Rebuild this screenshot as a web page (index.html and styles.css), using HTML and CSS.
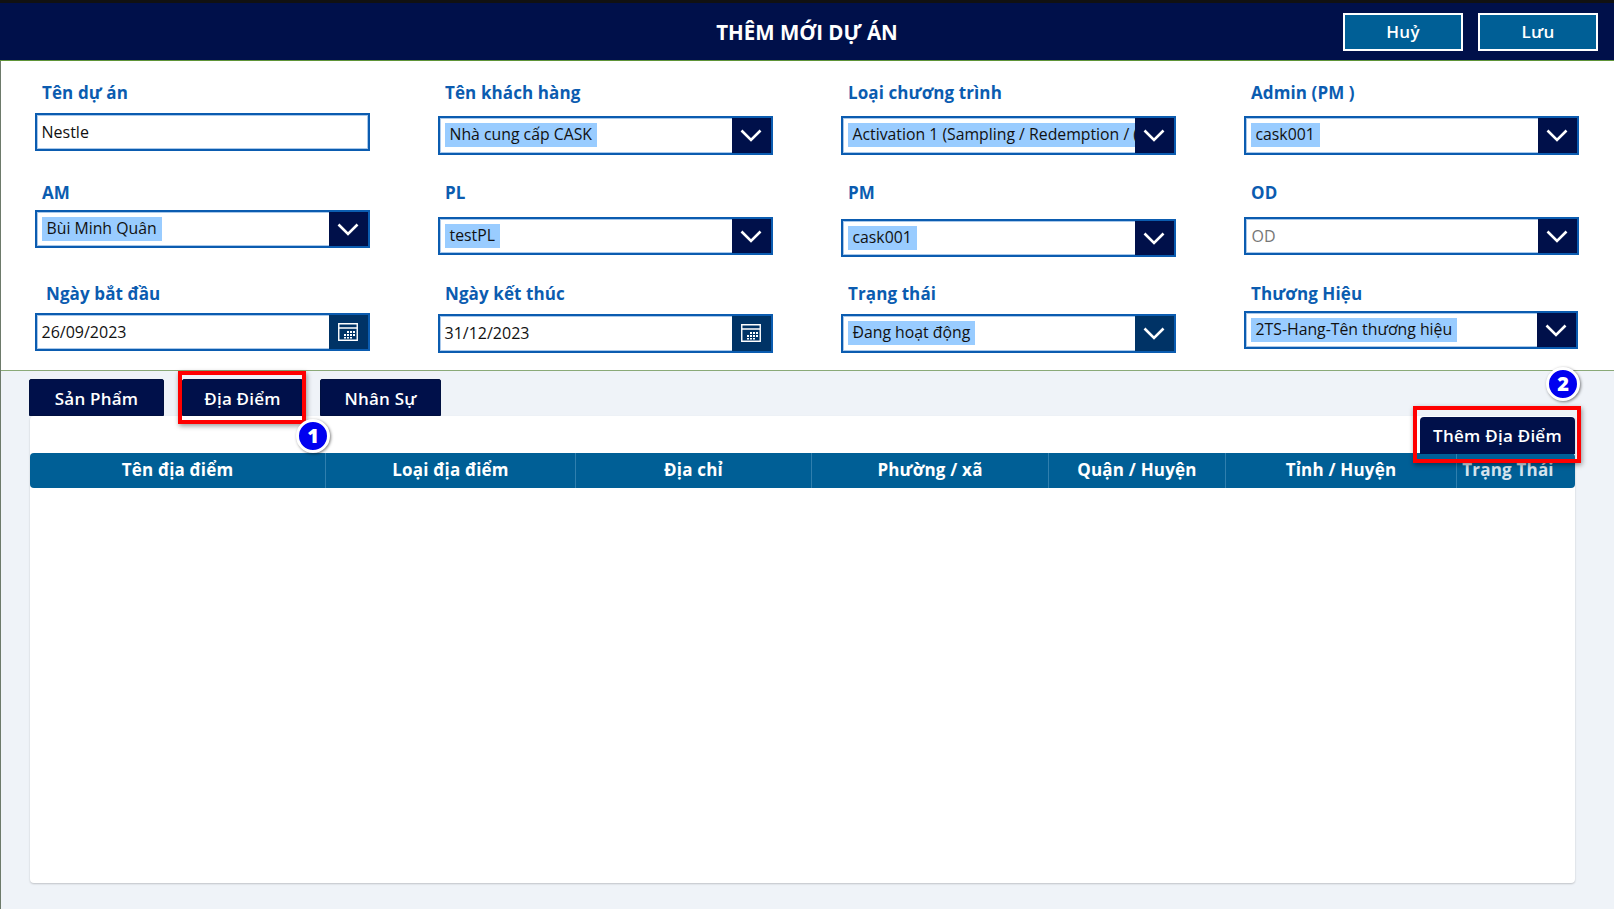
FILE: index.html
```html
<!DOCTYPE html>
<html lang="vi">
<head>
<meta charset="utf-8">
<title>Thêm mới dự án</title>
<link rel="stylesheet" href="styles.css">
</head>
<body>
<svg class="defs" width="0" height="0" aria-hidden="true">
  <symbol id="chev" viewBox="0 0 22 13"><path d="M1.5 1.5 11 11 20.5 1.5" fill="none" stroke="#fff" stroke-width="2.6"/></symbol>
  <symbol id="cal" viewBox="0 0 20 18"><path d="M.75.75h18.5v16.5H.75zM.75 5h18.500" fill="none" stroke="#fff" stroke-width="1.400"/><path d="M9 8h2v2H9zM12 8h2v2h-2zM15 8h2v2h-2zM6 11h2v2H6zM9 11h2v2H9zM12 11h2v2h-2zM15 11h2v2h-2zM6 14h2v1.500H6zM9 14h2v1.500H9zM12 14h2v1.500h-2z" fill="#fff"/></symbol>
</svg>
<div class="page">
  <header class="topbar">
    <div></div>
    <h1 class="title">THÊM MỚI DỰ ÁN</h1>
    <div class="actions">
      <button class="action">Huỷ</button>
      <button class="action">Lưu</button>
    </div>
  </header>

  <section class="form">
    <div class="row row-1">
      <div class="field">
        <label class="label">Tên dự án</label>
        <div class="box gap-0"><span class="plain">Nestle</span></div>
      </div>
      <div class="field">
        <label class="label">Tên khách hàng</label>
        <div class="box gap-3"><div class="value"><span class="chip">Nhà cung cấp CASK</span></div><span class="drop"><svg class="chev"><use href="#chev"/></svg></span></div>
      </div>
      <div class="field">
        <label class="label">Loại chương trình</label>
        <div class="box gap-3"><div class="value"><span class="chip">Activation 1 (Sampling / Redemption / (Gift)</span></div><span class="drop"><svg class="chev"><use href="#chev"/></svg></span></div>
      </div>
      <div class="field">
        <label class="label">Admin (PM )</label>
        <div class="box gap-3"><div class="value"><span class="chip">cask001</span></div><span class="drop"><svg class="chev"><use href="#chev"/></svg></span></div>
      </div>
    </div>

    <div class="row row-2">
      <div class="field">
        <label class="label">AM</label>
        <div class="box gap-0"><div class="value"><span class="chip">Bùi Minh Quân</span></div><span class="drop"><svg class="chev"><use href="#chev"/></svg></span></div>
      </div>
      <div class="field">
        <label class="label">PL</label>
        <div class="box gap-7"><div class="value"><span class="chip">testPL</span></div><span class="drop"><svg class="chev"><use href="#chev"/></svg></span></div>
      </div>
      <div class="field">
        <label class="label">PM</label>
        <div class="box gap-10"><div class="value"><span class="chip">cask001</span></div><span class="drop"><svg class="chev"><use href="#chev"/></svg></span></div>
      </div>
      <div class="field">
        <label class="label">OD</label>
        <div class="box gap-7"><div class="value"><span class="placeholder">OD</span></div><span class="drop"><svg class="chev"><use href="#chev"/></svg></span></div>
      </div>
    </div>

    <div class="row row-3">
      <div class="field">
        <label class="label label-in">Ngày bắt đầu</label>
        <div class="box gap-2"><span class="plain">26/09/2023</span><span class="drop drop-alt"><svg class="cal"><use href="#cal"/></svg></span></div>
      </div>
      <div class="field">
        <label class="label">Ngày kết thúc</label>
        <div class="box gap-3"><span class="plain">31/12/2023</span><span class="drop drop-alt"><svg class="cal"><use href="#cal"/></svg></span></div>
      </div>
      <div class="field">
        <label class="label">Trạng thái</label>
        <div class="box gap-3"><div class="value"><span class="chip">Đang hoạt động</span></div><span class="drop drop-alt"><svg class="chev"><use href="#chev"/></svg></span></div>
      </div>
      <div class="field">
        <label class="label">Thương Hiệu</label>
        <div class="box box-narrow gap-0"><div class="value"><span class="chip">2TS-Hang-Tên thương hiệu</span></div><span class="drop"><svg class="chev"><use href="#chev"/></svg></span></div>
      </div>
    </div>
  </section>

  <section class="lower">
    <nav class="tabs">
      <button class="tab tab-1">Sản Phẩm</button>
      <button class="tab tab-2">Địa Điểm</button>
      <button class="tab tab-3">Nhân Sự</button>
    </nav>
    <div class="panel">
      <button class="add">Thêm Địa Điểm</button>
      <div class="thead">
        <div class="th">Tên địa điểm</div>
        <div class="th">Loại địa điểm</div>
        <div class="th">Địa chỉ</div>
        <div class="th">Phường / xã</div>
        <div class="th">Quận / Huyện</div>
        <div class="th">Tỉnh / Huyện</div>
        <div class="th th-last">Trạng Thái</div>
      </div>
    </div>
    <div class="mark mark-1"></div>
    <div class="mark mark-2"></div>
    <div class="badge badge-1">1</div>
    <div class="badge badge-2">2</div>
  </section>
</div>
</body>
</html>
```
FILE: styles.css
```css
* { box-sizing: border-box; }
html, body { margin: 0; height: 100%; overflow: hidden; background: #eff3f8; }
body { font-family: "Open Sans", "Noto Sans", sans-serif; color: #111; }
.defs { position: absolute; }
button { font-family: inherit; cursor: pointer; }

.page { height: 909px; display: flex; flex-direction: column; border-left: 1px solid #6d7a6a; }

.topbar {
  height: 61px;
  flex: none;
  display: grid;
  grid-template-columns: 1fr auto 1fr;
  align-items: center;
  background: #00104a;
  border-top: 3px solid #111;
  border-bottom: 1px solid #5f9438;
  margin-left: -1px;
  padding: 0 16px;
}
.title { margin: 0; color: #fff; font-size: 20.500px; font-weight: 700; line-height: 28px; padding-top: 1px; }
.actions { display: flex; justify-content: flex-end; gap: 15px; }
.action {
  width: 120px;
  height: 38px;
  background: #005f96;
  color: #fff;
  border: 2px solid #fff;
  font-size: 17px;
  font-weight: 600;
  letter-spacing: .3px;
  padding: 0;
}

.form {
  height: 310px;
  flex: none;
  background: #fff;
  border-bottom: 1px solid #8aa978;
  padding: 18px 0 0 34px;
}
.row { display: grid; grid-template-columns: repeat(4, 334.500px); column-gap: 68.500px; }
.row-1 { height: 100px; }
.row-2 { height: 101px; }
.row-1 .label { margin-bottom: 3px; }
.row-1 .value { padding-bottom: 2px; }
.field { display: flex; flex-direction: column; align-items: stretch; }
.label {
  height: 26px;
  line-height: 27px;
  margin-left: 7px;
  color: #0b5cb0;
  font-size: 17px;
  font-weight: 700;
  letter-spacing: .1px;
  white-space: nowrap;
}
.label-in { margin-left: 11px; }

.box {
  height: 38px;
  flex: none;
  display: flex;
  align-items: center;
  border: 2px solid #0b5cb0;
  box-shadow: inset 0 0 0 1px #a9c8ea;
  background: #fff;
  font-size: 16px;
}
.box-narrow { margin-right: 1px; }
.gap-0 { margin-top: 5px; }
.gap-2 { margin-top: 7px; }
.gap-3 { margin-top: 8px; height: 39px; }
.gap-7 { margin-top: 12px; height: 38px; }
.gap-10 { margin-top: 14px; height: 38px; }
.row-3 .gap-3 { margin-top: 7.500px; }

.plain { flex: 1; min-width: 0; padding-left: 4.500px; }
.value { flex: 1; min-width: 0; overflow: hidden; white-space: nowrap; padding-left: 4.500px; display: flex; align-items: center; }
.chip { background: #99ccff; padding: 0 5px; height: 24px; line-height: 23px; flex: none; font-size: 15.800px; }
.placeholder { color: #777; line-height: 23px; padding-left: 1px; }

.drop {
  flex: none;
  width: 39px;
  align-self: stretch;
  display: flex;
  align-items: center;
  justify-content: center;
  background: #00104a;
}
.drop-alt { background: #003366; }
.chev { width: 22px; height: 13px; }
.cal { width: 20px; height: 18px; }

.lower { position: relative; flex: 1; min-height: 0; padding: 8px 0 0 28px; }
.tabs { display: flex; height: 37px; }
.tab {
  height: 37px;
  padding: 1px 0 0;
  background: #00104a;
  color: #fff;
  border: 1px solid #001040;
  border-radius: 2px 2px 0 0;
  font-size: 17px;
  font-weight: 600;
  letter-spacing: .2px;
}
.tab-1 { width: 135px; }
.tab-2 { width: 121px; margin-left: 18px; }
.tab-3 { width: 121px; margin-left: 17px; }

.panel {
  position: relative;
  width: 1545px;
  height: 467px;
  margin-left: 1px;
  background: #fff;
  border-radius: 4px;
  box-shadow: 0 1px 2px rgba(0, 0, 0, .2);
  padding-top: 37px;
}
.thead {
  display: grid;
  grid-template-columns: 296px 250px 236px 237px 177px 231px 118px;
  height: 35px;
  background: #005f96;
  border-radius: 4px;
}
.th {
  display: flex;
  align-items: center;
  justify-content: center;
  padding-bottom: 2px;
  color: #fff;
  font-size: 17px;
  font-weight: 700;
  letter-spacing: .2px;
  border-right: 1px solid #2f7fae;
  white-space: nowrap;
}
.th-last { border-right: 0; padding-right: 16px; color: #d5e4ee; }

.add {
  position: absolute;
  top: 1px;
  right: 0;
  width: 155px;
  height: 37px;
  padding: 0;
  background: #00104a;
  color: #fff;
  border: 0;
  border-radius: 4px 4px 0 0;
  font-size: 17px;
  font-weight: 600;
  letter-spacing: .25px;
}

.mark { position: absolute; border: 4px solid #f00; box-shadow: 1px 2px 5px rgba(0, 0, 0, .4); }
.mark-1 { left: 177px; top: 0; width: 128px; height: 53px; }
.mark-2 { left: 1412px; top: 35px; width: 168px; height: 57px; }

.badge {
  position: absolute;
  width: 34px;
  height: 34px;
  border-radius: 50%;
  background: #0000f0;
  border: 3px solid #fff;
  box-shadow: 1px 1px 3px rgba(0, 0, 0, .5);
  color: #fff;
  font-size: 20px;
  font-weight: 800;
  line-height: 27px;
  text-align: center;
}
.badge-1 { left: 295px; top: 48px; }
.badge-2 { left: 1545px; top: -4px; }
```
